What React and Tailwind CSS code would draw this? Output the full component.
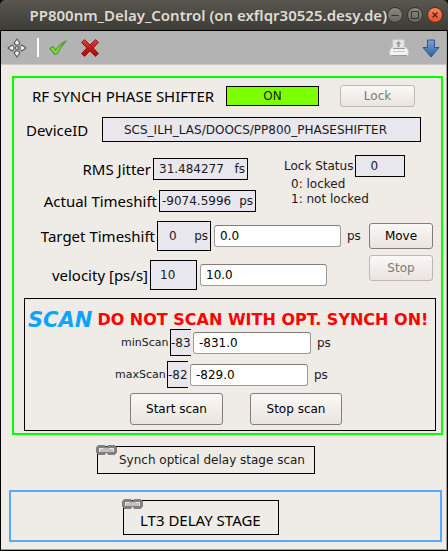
import React, { useState } from 'react';

const LABEL = 'font-["Noto_Sans",sans-serif] text-[15px] whitespace-nowrap text-black';

// Read-only value coming from the device
const Readout = ({ children, className = 'bg-[#e9e7ee]' }) => (
    <output className={`flex shrink-0 items-center border border-black whitespace-nowrap ${className}`}>
        {children}
    </output>
);

const Field = ({ id, value, className = '' }) => {
    const [text, setText] = useState(value);

    return (
        <input
            id={id}
            type="text"
            value={text}
            onChange={(e) => setText(e.target.value)}
            className={`h-[22px] min-w-0 rounded-[3px] border border-[#a09a95] border-t-[#857d78] bg-white pl-[5px] text-black ${className}`}
        />
    );
};

const Button = ({ children, className = '', ...props }) => (
    <button
        type="button"
        className={`shrink-0 rounded-[3px] border border-[#857d78] bg-linear-to-b from-[#faf8f6] to-[#e9e4df] text-black disabled:border-[#bfb9b4] disabled:text-[#7d7975] ${className}`}
        {...props}
    >
        {children}
    </button>
);

const ChainIcon = () => (
    <svg className="absolute -top-[2px] -left-[2px]" width="21" height="10" viewBox="0 0 21 10" fill="none">
        <path d="M9 3.500V3L8 1.500H3L1.500 3v4L3 8.500h5L9 7v-.500M12 3.500V3l1-1.500h5L19.500 3v4L18 8.500h-5L12 7v-.500" stroke="#808080" strokeWidth="3" />
        <path d="M4 5.500h13" stroke="#c0c0c0" strokeWidth="3" />
    </svg>
);

const TitleBar = () => (
    <header className="flex h-[31px] items-center justify-end rounded-t-[5px] border-b border-black bg-linear-to-b from-[#595750] to-[#3d3c37] pr-[5px]">
        <h1 className='font-["Noto_Sans",sans-serif] text-[15px] leading-[30px] font-semibold whitespace-nowrap text-[#dfdbd2]'>
            PP800nm_Delay_Control (on exflqr30525.desy.de)
        </h1>
        <div className="flex shrink-0 gap-1">
            <button type="button" aria-label="Minimize" className="size-4 rounded-full border border-[#33322e] bg-linear-to-b from-[#8c8a82] to-[#67655e]">
                <svg viewBox="0 0 14 14" stroke="#33322e" fill="none"><path d="M3.500 7.500h7" /></svg>
            </button>
            <button type="button" aria-label="Maximize" className="size-4 rounded-full border border-[#33322e] bg-linear-to-b from-[#8c8a82] to-[#67655e]">
                <svg viewBox="0 0 14 14" stroke="#33322e" fill="none"><path d="M3.500 3.500h7v7h-7z" /></svg>
            </button>
            <button type="button" aria-label="Close" className="size-4 rounded-full border border-[#5a2b1b] bg-linear-to-b from-[#f78560] to-[#e4501d]">
                <svg viewBox="0 0 14 14" stroke="#4a2013" strokeWidth="1.300" fill="none"><path d="M4.500 4.500l5 5M9.500 4.500l-5 5" /></svg>
            </button>
        </div>
    </header>
);

const Toolbar = () => (
    <nav className="flex h-[34px] items-center border-b border-[#cfcac5] bg-[#b3b3b3] pr-[5px] pl-[6px]">
        <button type="button" aria-label="Move view">
            <svg width="20" height="20" viewBox="0 0 20 20" fill="#f4f4f4" stroke="#555" strokeWidth="1.100" strokeLinejoin="round">
                <path d="M10 1l3 4.200-2 1.800H9L7 5.200zM10 19l3-4.200-2-1.800H9l-2 1.800zM1 10l4.200-3L7 9v2l-1.800 2zM19 10l-4.200-3L13 9v2l1.800 2z" />
                <circle cx="10" cy="10" r="1.500" />
            </svg>
        </button>
        <span className="ml-[10px] h-[19px] w-[2px] bg-white" />
        <button type="button" aria-label="Apply" className="ml-[9px]">
            <svg width="20" height="20" viewBox="0 0 20 20">
                <path d="M2 10.500l3-2 2.700 4C10.200 8 13.500 5 18 3c-4 4-6.500 8-8.500 12.200L7 16.500z" fill="#8ae234" stroke="#4a9a3a" strokeWidth="1.200" strokeLinejoin="round" />
            </svg>
        </button>
        <button type="button" aria-label="Cancel" className="ml-3">
            <svg width="20" height="20" viewBox="0 0 20 20">
                <defs>
                    <linearGradient id="cross" x1="0" y1="0" x2="0" y2="1">
                        <stop offset="0" stopColor="#e04444" />
                        <stop offset="0.500" stopColor="#c01818" />
                        <stop offset="1" stopColor="#b01010" />
                    </linearGradient>
                </defs>
                <path d="M4.500 1.500L10 7l5.500-5.500 3 3L13.200 10l5.300 5.500-3 3L10 13l-5.500 5.500-3-3L6.800 10 1.500 4.500z" fill="url(#cross)" stroke="#9c1515" strokeLinejoin="round" />
            </svg>
        </button>
        <button type="button" aria-label="Print" className="ml-auto">
            <svg width="20" height="18" viewBox="0 0 20 18">
                <path d="M4 1h11v9H4z" fill="#e9e9e9" stroke="#d5d5d5" />
                <path d="M9.500 2l3 3h-2v3h-2V5h-2z" fill="#999" />
                <path d="M3 8.500h14l2 3v4q0 1-1 1H2q-1 0-1-1v-4z" fill="#f3f3f3" stroke="#dcdcdc" />
                <path d="M4 9.500h12M2 16.500h16" stroke="#999" />
                <path d="M4 12.500h12" stroke="#c8c8c8" />
            </svg>
        </button>
        <button type="button" aria-label="Download" className="ml-3">
            <svg width="20" height="20" viewBox="0 0 20 20">
                <defs>
                    <linearGradient id="arrow" x1="0" y1="0" x2="0" y2="1">
                        <stop offset="0" stopColor="#7ba3d4" />
                        <stop offset="1" stopColor="#2f5f9f" />
                    </linearGradient>
                </defs>
                <path d="M6.500 2h7v7.500H18l-8 9.500-8-9.500h4.500z" fill="url(#arrow)" stroke="#2c5590" strokeLinejoin="round" />
            </svg>
        </button>
    </nav>
);

const ScanPanel = () => (
    <section className="mr-[5px] ml-[10px] mt-[8px] border border-black pb-[5px]">
        <div className="flex items-center gap-[5px] pt-3 pl-[3px] font-bold whitespace-nowrap">
            <h2 className="text-[21px] leading-[18px] text-[#0aa5ff] italic">SCAN</h2>
            <p className="text-[16px] leading-[18px] text-[#ff0000]">DO NOT SCAN WITH OPT. SYNCH ON!</p>
        </div>
        <div className="flex items-center pl-24">
            <label htmlFor="minScan" className="w-[49px] shrink-0 text-[11px]">minScan</label>
            <Readout className="h-[27px] w-[21px] overflow-hidden border-r-0 bg-[#e9e7ee]">-83</Readout>
            <Field id="minScan" value="-831.0" className="ml-[2px] w-[118px]" />
            <span className="ml-[6px]">ps</span>
        </div>
        <div className="mt-[5px] flex items-center pl-[90px]">
            <label htmlFor="maxScan" className="w-[52px] shrink-0 text-[11px]">maxScan</label>
            <Readout className="h-[27px] w-[21px] overflow-hidden border-r-0 bg-[#e9e7ee]">-82</Readout>
            <Field id="maxScan" value="-829.0" className="ml-[2px] w-[118px]" />
            <span className="ml-[6px]">ps</span>
        </div>
        <div className="mt-[5px] flex gap-[27px] pl-[105px]">
            <Button className="h-8 w-[93px]">Start scan</Button>
            <Button className="h-8 w-[92px]">Stop scan</Button>
        </div>
    </section>
);

const PhaseShifter = () => (
    <section className="mr-[3px] ml-[11px] border-2 border-[#00ff00] pb-[2px]">
        <div className="flex items-center pt-[7px] pr-[26px] pl-[18px]">
            <h2 className={LABEL}>RF SYNCH PHASE SHIFTER</h2>
            <Readout className="ml-auto h-5 w-[93px] justify-center bg-[#7cff00]">ON</Readout>
            <Button disabled className="ml-[21px] h-[22px] w-[75px]">Lock</Button>
        </div>
        <div className="mt-[10px] flex items-center pr-5 pl-3">
            <span className={`${LABEL} w-[76px]`}>DeviceID</span>
            <Readout className="h-[25px] min-w-0 flex-1 bg-[#e9e7ee] pl-[21px]">SCS_ILH_LAS/DOOCS/PP800_PHASESHIFTER</Readout>
        </div>

        <div className="mt-[13px] flex">
            <div className="w-[270px] shrink-0 pt-[3px]">
                <div className="flex items-center gap-[2px]">
                    <span className={`${LABEL} w-[137px] text-right`}>RMS Jitter</span>
                    <Readout className="h-[22px] w-[95px] justify-between bg-[#e9e7ee] pr-[2px] pl-[5px]">
                        <span>31.484277</span>
                        <span>fs</span>
                    </Readout>
                </div>
                <div className="mt-[10px] flex items-center gap-[2px]">
                    <span className={`${LABEL} w-[143px] text-right`}>Actual Timeshift</span>
                    <Readout className="h-[22px] w-[97px] justify-between bg-[#e9e7ee] pr-[2px] pl-[2px]">
                        <span>-9074.5996</span>
                        <span>ps</span>
                    </Readout>
                </div>
            </div>
            <div className="whitespace-nowrap">
                <div className="flex items-center gap-[2px]">
                    <span>Lock Status</span>
                    <Readout className="h-[22px] w-[50px] bg-[#e9e7ee] pl-[14px]">0</Readout>
                </div>
                <p className="pl-[7px] leading-[14px]">0: locked</p>
                <p className="pl-[7px] leading-4">1: not locked</p>
            </div>
        </div>

        <div className="mt-[9px] flex justify-between pr-2">
            <div>
                <div className="flex items-center">
                    <label htmlFor="target" className={`${LABEL} w-[143px] pr-[2px] text-right`}>Target Timeshift</label>
                    <Readout className="h-[30px] w-[54px] justify-between bg-[#e9e7ee] pr-[2px] pl-[11px]">
                        <span>0</span>
                        <span>ps</span>
                    </Readout>
                    <Field id="target" value="0.0" className="ml-[3px] w-[127px]" />
                    <span className="ml-[6px]">ps</span>
                </div>
                <div className="mt-[9px] flex items-center">
                    <label htmlFor="velocity" className={`${LABEL} w-[136px] pr-[2px] text-right`}>velocity [ps/s]</label>
                    <Readout className="h-[30px] w-[47px] bg-[#e9e7ee] pl-[9px]">10</Readout>
                    <Field id="velocity" value="10.0" className="ml-[3px] w-[127px]" />
                </div>
            </div>
            <div className="flex flex-col gap-[6px] pt-[2px]">
                <Button className="h-[26px] w-16">Move</Button>
                <Button disabled className="h-[26px] w-16">Stop</Button>
            </div>
        </div>

        <ScanPanel />
    </section>
);

export default function App() {
    return (
        <main className='bg-black pb-px font-["DejaVu_Sans",sans-serif] text-[12px] leading-4 text-[#1a1a1a]'>
            <TitleBar />
            <div className="mx-px border-r border-b border-[#a5a29f] bg-[#efebe7]">
                <Toolbar />
                <div className="pt-[11px] pb-[7px]">
                    <PhaseShifter />
                    <a href="#synch" className="relative mt-[11px] ml-24 block w-[218px] border border-black py-[5px] pl-[21px] whitespace-nowrap">
                        <ChainIcon />
                        Synch optical delay stage scan
                    </a>
                    <section className="mt-4 mr-[4px] ml-2 border-2 border-[#55aaff] pt-2 pb-[5px] pl-[112px]">
                        <a href="#lt3" className={`${LABEL} relative block w-[156px] border border-black pt-[9px] pb-1 pl-4 leading-5`}>
                            <ChainIcon />
                            LT3 DELAY STAGE
                        </a>
                    </section>
                </div>
            </div>
        </main>
    );
}
